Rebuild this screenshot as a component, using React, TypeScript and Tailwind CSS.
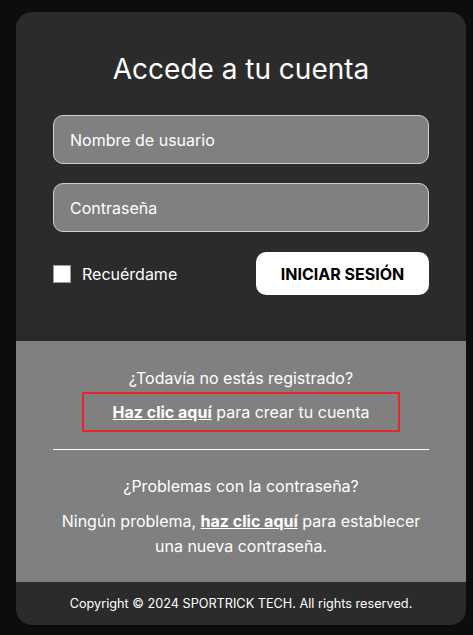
import type { FormEvent } from "react";

const inputClass =
  "h-[49px] w-full rounded-[10px] border border-[#d0d0d0] bg-[#808080] px-4 text-base text-white placeholder:text-white focus:outline-none";

export default function App() {
  const onSubmit = (e: FormEvent<HTMLFormElement>) => {
    e.preventDefault();
  };

  return (
    <div className="min-h-[635px] w-full bg-[#0d0d0d] px-4 pt-3 font-['Inter',sans-serif] text-white">
      <div className="w-[450px] overflow-hidden rounded-2xl bg-[#2b2b2b]">
        {/* login */}
        <form className="px-[37px] pb-[46px] pt-[39px]" onSubmit={onSubmit}>
          <h1 className="text-center text-[28px] leading-9 font-normal">Accede a tu cuenta</h1>
          <div className="mt-7 flex flex-col gap-[19px]">
            <input type="text" placeholder="Nombre de usuario" className={inputClass} />
            <input type="password" placeholder="Contraseña" className={inputClass} />
          </div>
          <div className="mt-5 flex items-center justify-between">
            <label className="flex items-center gap-[11px] text-base">
              <span className="block h-[18px] w-[18px] border border-[#9a9a9a] bg-white" />
              Recuérdame
            </label>
            <button
              type="submit"
              className="h-[43px] w-[173px] rounded-[10px] bg-white text-base font-bold text-black"
            >
              INICIAR SESIÓN
            </button>
          </div>
        </form>

        {/* registro */}
        <div className="bg-[#808080] px-[37px] pb-[23px] pt-[25px] text-center text-base">
          <p className="leading-6">¿Todavía no estás registrado?</p>
          <div className="mx-auto mt-[2px] flex h-10 w-[318px] items-center justify-center border-2 border-[#e5262b]">
            <span>
              <a href="#" className="font-bold underline">
                Haz clic aquí
              </a>{" "}
              para crear tu cuenta
            </span>
          </div>
          <div className="mt-[17px] h-px bg-white" />
          <p className="mt-6 leading-6">¿Problemas con la contraseña?</p>
          <p className="mt-[11px] leading-[25px]">
            Ningún problema,{" "}
            <a href="#" className="font-bold underline">
              haz clic aquí
            </a>{" "}
            para establecer
            <br />
            una nueva contraseña.
          </p>
        </div>

        <footer className="flex h-[43px] items-center justify-center text-[12.7px]">
          Copyright © 2024 SPORTRICK TECH. All rights reserved.
        </footer>
      </div>
    </div>
  );
}
